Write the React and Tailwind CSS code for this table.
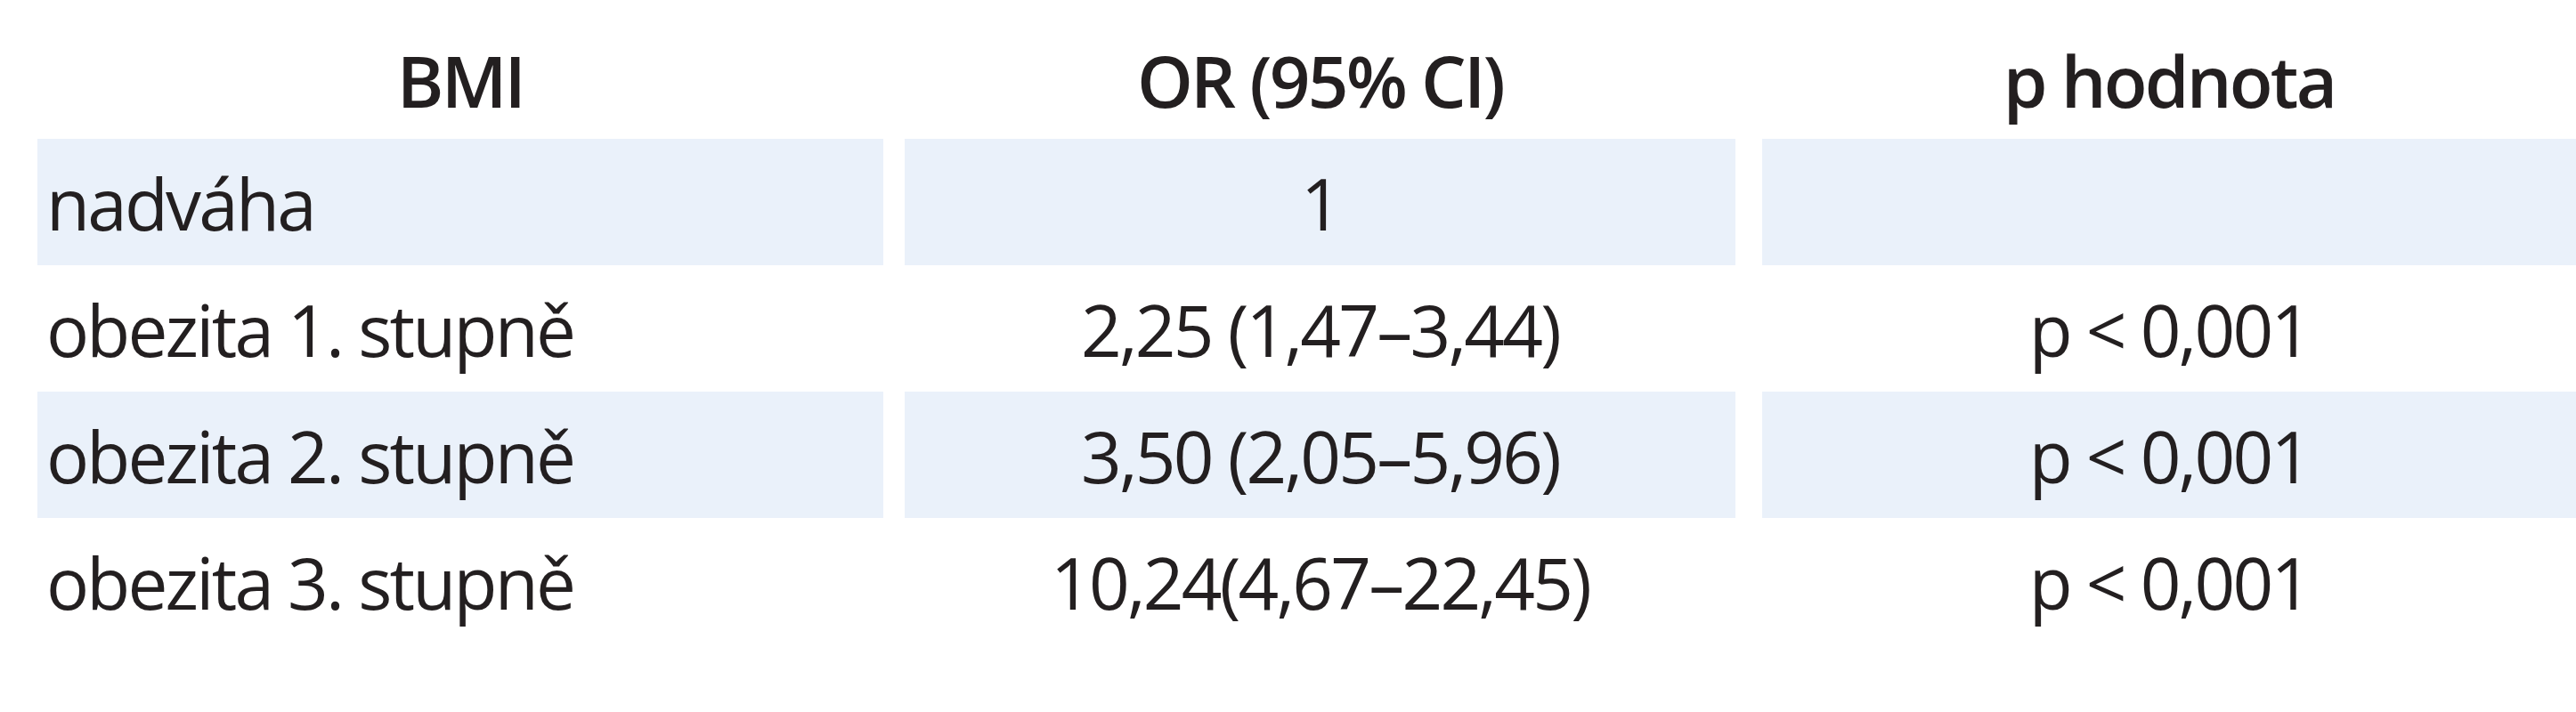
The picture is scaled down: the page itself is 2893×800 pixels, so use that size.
import React from 'react';

const rows = [
  { bmi: 'nadváha', or: '1', p: '', shaded: true },
  { bmi: 'obezita 1. stupně', or: '2,25 (1,47–3,44)', p: 'p < 0,001', shaded: false },
  { bmi: 'obezita 2. stupně', or: '3,50 (2,05–5,96)', p: 'p < 0,001', shaded: true },
  { bmi: 'obezita 3. stupně', or: '10,24(4,67–22,45)', p: 'p < 0,001', shaded: false },
];

export default function App() {
  return (
    <div
      className="w-full h-[800px] overflow-hidden bg-white text-[#231f20] text-[80px] tracking-[-0.035em]"
      style={{ fontFamily: '"Open Sans", "Noto Sans", sans-serif' }}
    >
      {/* header */}
      <div className="flex h-[156px] pl-[42px] pt-[35px] font-semibold leading-[109px]">
        <div className="w-[950px] text-center">BMI</div>
        <div className="w-[933px] ml-[24px] text-center">OR (95% CI)</div>
        <div className="flex-1 ml-[30px] text-center">p hodnota</div>
      </div>

      {rows.map((row) => (
        <div key={row.bmi} className="flex h-[142px] pl-[42px] leading-[109px]">
          <div
            className={
              'w-[950px] flex items-center pl-[10px] ' +
              (row.shaded ? 'bg-[#eaf1fa]' : 'bg-white')
            }
          >
            {row.bmi}
          </div>
          <div
            className={
              'w-[933px] ml-[24px] flex items-center justify-center ' +
              (row.shaded ? 'bg-[#eaf1fa]' : 'bg-white')
            }
          >
            {row.or}
          </div>
          <div
            className={
              'flex-1 ml-[30px] flex items-center justify-center ' +
              (row.shaded ? 'bg-[#eaf1fa]' : 'bg-white')
            }
          >
            {row.p}
          </div>
        </div>
      ))}
    </div>
  );
}
